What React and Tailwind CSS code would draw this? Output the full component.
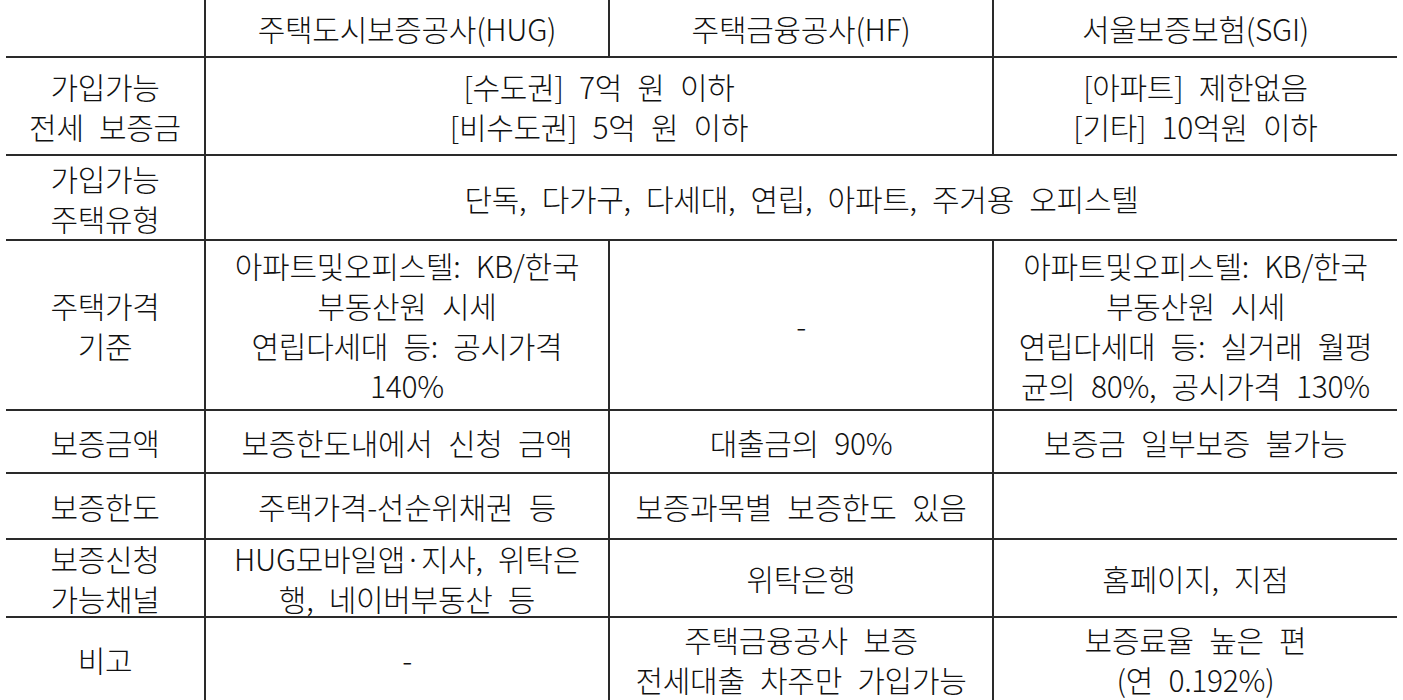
import React from "react";

const B = "border-[#2a2a2a]";

function Cell({ children, className = "" }) {
  return (
    <div
      className={`flex items-center justify-center text-center ${className}`}
    >
      <div>{children}</div>
    </div>
  );
}

export default function App() {
  const first = `border-b-2 ${B}`;
  const mid = `border-b-2 border-l-2 ${B}`;
  const lastRowFirst = ``;
  const lastRowMid = `border-l-2 ${B}`;
  return (
    <div
      className="w-[1403px] h-[700px] overflow-hidden bg-white text-[#111111] px-[6px]"
      style={{ fontFamily: '"Noto Sans CJK KR", "Noto Sans", sans-serif' }}
    >
      <div className="grid grid-cols-[198px_404px_384px_405px] grid-rows-[58px_98px_85px_170px_63px_66px_78px_82px] h-[700px] text-[30px] font-light leading-[40px] tracking-[-0.3px] [word-spacing:9px]">
        {/* header */}
        <Cell className={first}></Cell>
        <Cell className={mid}>주택도시보증공사(HUG)</Cell>
        <Cell className={mid}>주택금융공사(HF)</Cell>
        <Cell className={mid}>서울보증보험(SGI)</Cell>

        {/* row 1 */}
        <Cell className={first}>
          가입가능
          <br />
          전세 보증금
        </Cell>
        <Cell className={`${mid} col-span-2`}>
          [수도권] 7억 원 이하
          <br />
          [비수도권] 5억 원 이하
        </Cell>
        <Cell className={mid}>
          [아파트] 제한없음
          <br />
          [기타] 10억원 이하
        </Cell>

        {/* row 2 */}
        <Cell className={first}>
          가입가능
          <br />
          주택유형
        </Cell>
        <Cell className={`${mid} col-span-3`}>
          단독, 다가구, 다세대, 연립, 아파트, 주거용 오피스텔
        </Cell>

        {/* row 3 */}
        <Cell className={first}>
          주택가격
          <br />
          기준
        </Cell>
        <Cell className={mid}>
          아파트및오피스텔: KB/한국
          <br />
          부동산원 시세
          <br />
          연립다세대 등: 공시가격
          <br />
          140%
        </Cell>
        <Cell className={mid}>-</Cell>
        <Cell className={mid}>
          아파트및오피스텔: KB/한국
          <br />
          부동산원 시세
          <br />
          연립다세대 등: 실거래 월평
          <br />
          균의 80%, 공시가격 130%
        </Cell>

        {/* row 4 */}
        <Cell className={first}>보증금액</Cell>
        <Cell className={mid}>보증한도내에서 신청 금액</Cell>
        <Cell className={mid}>대출금의 90%</Cell>
        <Cell className={mid}>보증금 일부보증 불가능</Cell>

        {/* row 5 */}
        <Cell className={first}>보증한도</Cell>
        <Cell className={mid}>주택가격-선순위채권 등</Cell>
        <Cell className={mid}>보증과목별 보증한도 있음</Cell>
        <Cell className={mid}></Cell>

        {/* row 6 */}
        <Cell className={first}>
          보증신청
          <br />
          가능채널
        </Cell>
        <Cell className={mid}>
          HUG모바일앱·지사, 위탁은
          <br />
          행, 네이버부동산 등
        </Cell>
        <Cell className={mid}>위탁은행</Cell>
        <Cell className={mid}>홈페이지, 지점</Cell>

        {/* row 7 */}
        <Cell className={lastRowFirst}>비고</Cell>
        <Cell className={lastRowMid}>-</Cell>
        <Cell className={lastRowMid}>
          주택금융공사 보증
          <br />
          전세대출 차주만 가입가능
        </Cell>
        <Cell className={lastRowMid}>
          보증료율 높은 편
          <br />
          (연 0.192%)
        </Cell>
      </div>
    </div>
  );
}
